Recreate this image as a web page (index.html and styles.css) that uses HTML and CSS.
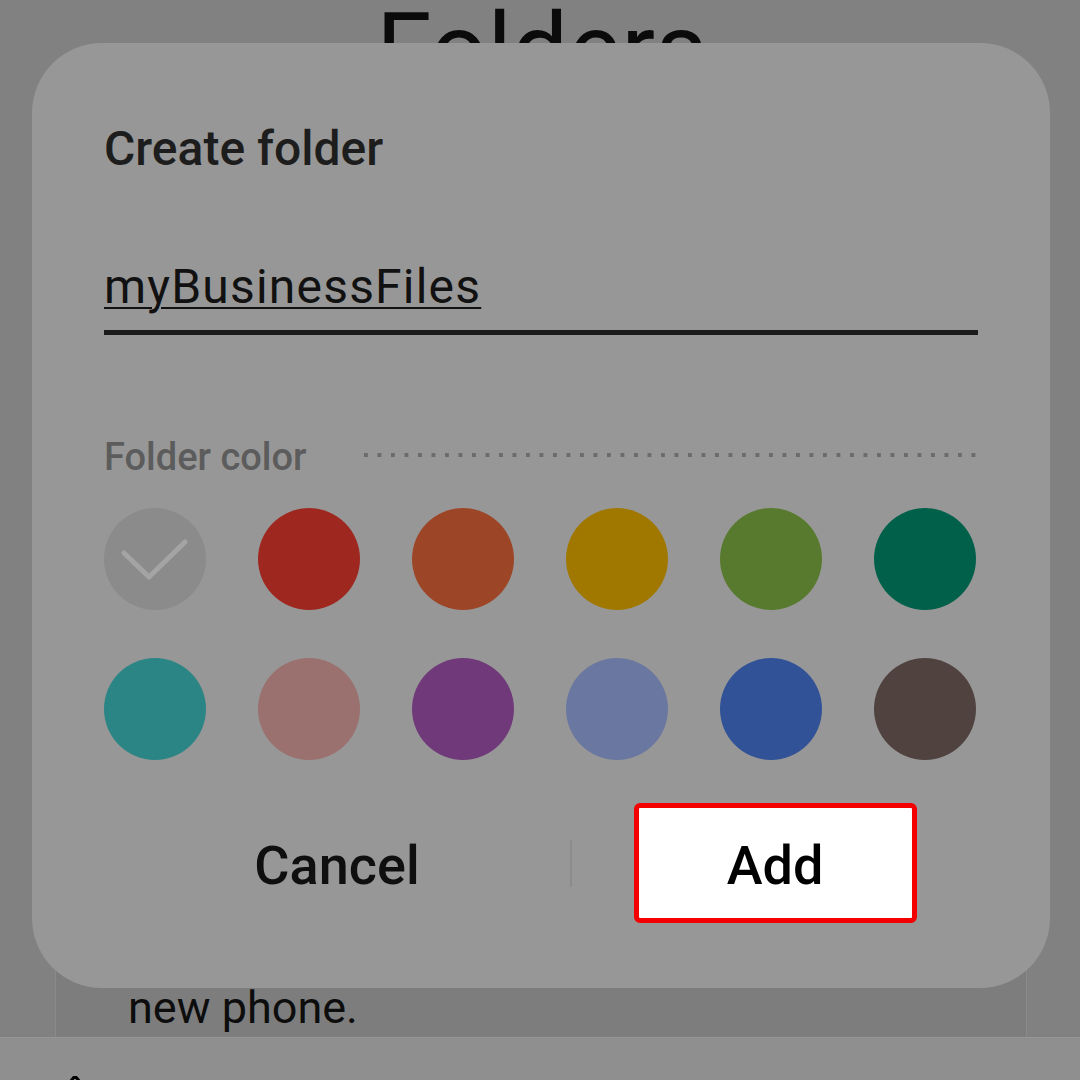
FILE: index.html
```html
<!DOCTYPE html>
<html lang="en">
<head>
<meta charset="utf-8">
<title>Create folder</title>
<link rel="stylesheet" href="styles.css">
</head>
<body>
<div class="screen">
  <div class="page">
    <h1 class="page-title">Folders</h1>
    <div class="card">
      <p class="card-text">new phone.</p>
    </div>
    <div class="navbar">
      <svg class="nav-icon" width="12" height="8" viewBox="0 0 12 8"><path d="M6 0 L1 6 M6 0 L11 6" stroke="#000" stroke-width="3" fill="none"/></svg>
    </div>
  </div>

  <div class="dialog">
    <h2 class="dialog-title">Create folder</h2>
    <div class="field"><span class="field-text">myBusinessFiles</span></div>
    <div class="color-head">
      <span class="color-label">Folder color</span>
      <span class="dots"></span>
    </div>
    <div class="swatches">
      <div class="swatch swatch-default">
        <svg width="102" height="102" viewBox="0 0 102 102"><polyline points="20,45 45,69 81,34" fill="none" stroke="#a4a4a4" stroke-width="5" stroke-linecap="round" stroke-linejoin="round"/></svg>
      </div>
      <div class="swatch c-red"></div>
      <div class="swatch c-orange"></div>
      <div class="swatch c-amber"></div>
      <div class="swatch c-green"></div>
      <div class="swatch c-forest"></div>
      <div class="swatch c-teal"></div>
      <div class="swatch c-rose"></div>
      <div class="swatch c-purple"></div>
      <div class="swatch c-periwinkle"></div>
      <div class="swatch c-blue"></div>
      <div class="swatch c-brown"></div>
    </div>
    <div class="actions">
      <button class="btn btn-cancel">Cancel</button>
      <span class="divider"></span>
      <button class="btn btn-add">Add</button>
    </div>
  </div>
</div>
</body>
</html>
```

FILE: styles.css
```css
html, body {
  margin: 0;
  padding: 0;
}

body {
  font-family: Roboto, "Noto Sans", "Liberation Sans", sans-serif;
  background: #808080;
}

.screen {
  position: relative;
  width: 1080px;
  height: 1080px;
  overflow: hidden;
  background: #818181;
}

.page {
  display: flex;
  flex-direction: column;
  height: 1080px;
}

.page-title {
  margin: 0;
  padding-left: 3px;
  font-weight: 400;
  font-size: 100px;
  line-height: 99px;
  text-align: center;
  color: #0b0b0b;
}

.card {
  flex: 1;
  margin: 0 53px 0 55px;
  border-left: 1px solid #8a8a8a;
  border-right: 1px solid #8a8a8a;
  background: #7d7d7d;
  display: flex;
  flex-direction: column;
  justify-content: flex-end;
  padding: 0 0 2px 72px;
}

.card-text {
  margin: 0;
  font-weight: 400;
  font-size: 45px;
  line-height: 54px;
  color: #0d0d0d;
}

.navbar {
  height: 43px;
  box-sizing: border-box;
  background: #8f8f8f;
  border-top: 1px solid #959595;
  padding: 38px 0 0 69px;
}

.nav-icon {
  display: block;
}

.dialog {
  position: absolute;
  left: 32px;
  top: 43px;
  width: 1018px;
  height: 945px;
  box-sizing: border-box;
  padding: 82px 72px 0;
  border-radius: 70px;
  background: #979797;
  display: flex;
  flex-direction: column;
}

.dialog-title {
  margin: 0;
  font-weight: 500;
  font-size: 48px;
  line-height: 48px;
  color: #1d1d1d;
}

.field {
  margin-top: 89px;
  padding-bottom: 18px;
  border-bottom: 5px solid #1c1c1c;
}

.field-text {
  display: block;
  font-weight: 400;
  font-size: 48px;
  line-height: 50px;
  letter-spacing: 1.2px;
  color: #111111;
  text-decoration: underline;
  text-decoration-thickness: 2px;
  text-underline-offset: 4px;
}

.color-head {
  margin-top: 100px;
  display: flex;
  height: 44px;
}

.color-label {
  font-weight: 500;
  font-size: 38px;
  line-height: 44px;
  color: #5c5c5c;
}

.dots {
  flex: 1;
  margin-left: 57px;
  margin-top: 18px;
  height: 4px;
  background-image: linear-gradient(90deg, #6c6c6c 0 4px, transparent 4px);
  background-size: 13.5px 4px;
  background-repeat: repeat-x;
}

.swatches {
  margin-top: 29px;
  display: grid;
  grid-template-columns: repeat(6, 102px);
  grid-auto-rows: 102px;
  column-gap: 52px;
  row-gap: 48px;
}

.swatch {
  width: 102px;
  height: 102px;
  border-radius: 50%;
}

.swatch svg {
  display: block;
}

.swatch-default { background: #8b8b8b; }
.c-red { background: #9e2820; }
.c-orange { background: #9d4527; }
.c-amber { background: #a07800; }
.c-green { background: #587a2e; }
.c-forest { background: #00604a; }
.c-teal { background: #2b8584; }
.c-rose { background: #9a716e; }
.c-purple { background: #703a7a; }
.c-periwinkle { background: #6a77a0; }
.c-blue { background: #315296; }
.c-brown { background: #4f423f; }

.actions {
  margin-top: 43px;
  display: grid;
  grid-template-columns: 466px 2px 1fr;
  align-items: center;
  height: 120px;
}

.btn {
  font-family: Roboto, "Noto Sans", "Liberation Sans", sans-serif;
  font-weight: 500;
  font-size: 54px;
  line-height: 54px;
  height: 120px;
  padding: 5px 0 0;
  margin: 0;
  border: none;
  background: transparent;
  color: #0f0f0f;
}

.divider {
  width: 2px;
  height: 47px;
  background: #8c8c8c;
}

.btn-add {
  justify-self: center;
  width: 283px;
  box-sizing: border-box;
  border: 5px solid #f40000;
  border-radius: 6px;
  background: #ffffff;
  color: #000000;
}
```
